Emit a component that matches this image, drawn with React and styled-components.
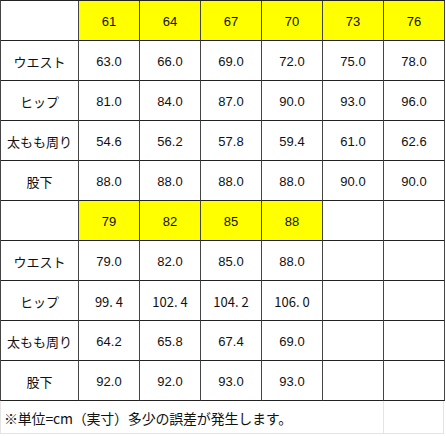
import React from "react";
import styled, { createGlobalStyle } from "styled-components";

const Global = createGlobalStyle`
  html, body { margin: 0; padding: 0; background: #fff; }
  body { font-family: "Liberation Sans", Arial, sans-serif; color: #111; }
`;

const Page = styled.div`
  width: 446px;
  height: 436px;
  overflow: hidden;
`;

const Sheet = styled.div`
  display: grid;
  grid-template-columns: 78px repeat(6, 61px);
  grid-auto-rows: 40px;
  border-left: 1px solid #444;
  border-top: 1px solid #222;
  width: 444px;
`;

const Cell = styled.div`
  box-sizing: border-box;
  border-right: 1px solid #444;
  border-bottom: 1px solid #222;
  background: ${(p) => (p.$head ? "#ffff00" : "#fff")};
  display: flex;
  align-items: center;
  justify-content: center;
  padding-top: ${(p) => (p.$head ? "2px" : "1px")};
  font-size: 13px;
  font-family: ${(p) =>
    p.$label || p.$jp
      ? '"Noto Sans CJK JP", "Liberation Sans", sans-serif'
      : '"Liberation Sans", Arial, sans-serif'};
  color: #111;
  white-space: nowrap;
`;

const Footer = styled.div`
  display: grid;
  grid-template-columns: 383px 60px;
  height: 33px;
  border-left: 1px solid #e4e4e4;
  width: 444px;
  box-sizing: border-box;
`;

const Note = styled.div`
  box-sizing: border-box;
  border-right: 1px solid #e4e4e4;
  border-bottom: 1px solid #e4e4e4;
  display: flex;
  align-items: center;
  padding-left: 3px;
  padding-top: 1px;
  font-family: "Noto Sans CJK JP", "Liberation Sans", sans-serif;
  font-size: 14px;
  color: #111;
  white-space: nowrap;
  letter-spacing: -0.2px;
`;

const Blank = styled.div`
  box-sizing: border-box;
  border-right: 1px solid #e4e4e4;
  border-bottom: 1px solid #e4e4e4;
`;

const labels = ["ウエスト", "ヒップ", "太もも周り", "股下"];

const blocks = [
  {
    sizes: ["61", "64", "67", "70", "73", "76"],
    rows: [
      ["63.0", "66.0", "69.0", "72.0", "75.0", "78.0"],
      ["81.0", "84.0", "87.0", "90.0", "93.0", "96.0"],
      ["54.6", "56.2", "57.8", "59.4", "61.0", "62.6"],
      ["88.0", "88.0", "88.0", "88.0", "90.0", "90.0"],
    ],
  },
  {
    sizes: ["79", "82", "85", "88", "", ""],
    rows: [
      ["79.0", "82.0", "85.0", "88.0", "", ""],
      [
        { v: "99. 4", jp: true },
        { v: "102. 4", jp: true },
        { v: "104. 2", jp: true },
        { v: "106. 0", jp: true },
        "",
        "",
      ],
      ["64.2", "65.8", "67.4", "69.0", "", ""],
      ["92.0", "92.0", "93.0", "93.0", "", ""],
    ],
  },
];

export default function App() {
  return (
    <Page>
      <Global />
      <Sheet>
        {blocks.map((b, bi) => (
          <React.Fragment key={bi}>
            <Cell />
            {b.sizes.map((s, i) => (
              <Cell key={"h" + i} $head={s !== ""}>
                {s}
              </Cell>
            ))}
            {b.rows.map((r, ri) => (
              <React.Fragment key={ri}>
                <Cell $label>{labels[ri]}</Cell>
                {r.map((c, ci) =>
                  typeof c === "object" ? (
                    <Cell key={ci} $jp>
                      {c.v}
                    </Cell>
                  ) : (
                    <Cell key={ci}>{c}</Cell>
                  )
                )}
              </React.Fragment>
            ))}
          </React.Fragment>
        ))}
      </Sheet>
      <Footer>
        <Note>※単位=cm（実寸）多少の誤差が発生します。</Note>
        <Blank />
      </Footer>
    </Page>
  );
}
